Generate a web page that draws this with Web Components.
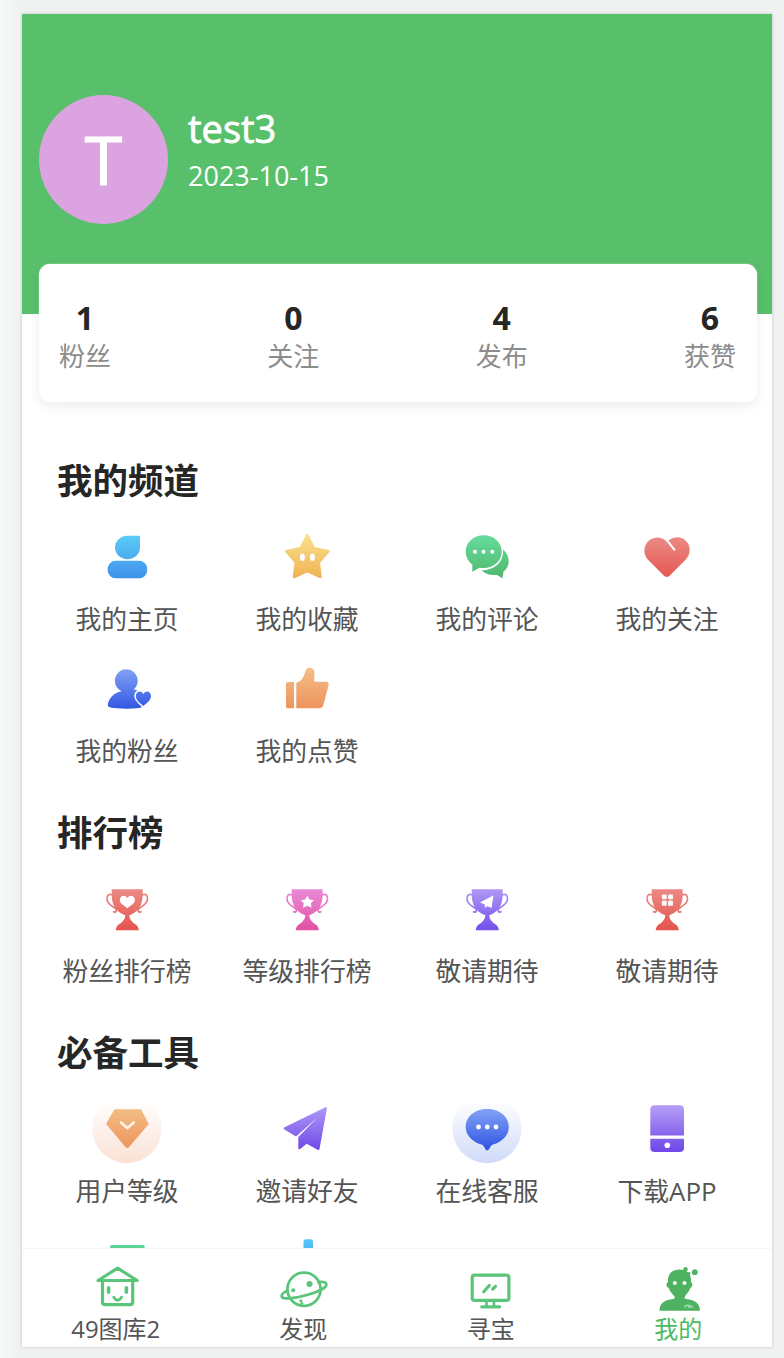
<!DOCTYPE html>
<html lang="zh-CN">
<head>
<meta charset="utf-8">
<title>我的</title>
<style>
    body {
        margin: 0;
        background: linear-gradient(90deg, #f7f9f8 0, #f0f2f1 20px);
        font-family: "Open Sans", "Noto Sans CJK SC", sans-serif;
    }
</style>
</head>
<body>
<mine-page></mine-page>

<script>
const TROPHY = `
    <path d="M19.700 16.300H50.700V21C50.700 31 47.500 38.500 37.300 42.200 C37.500 47 40.500 49.500 44.500 52 Q46.700 54 46.900 57.300H23.600Q23.800 54 26 52C30 49.500 33 47 33.300 42.200C23 38.500 19.700 31 19.700 21Z"/>
    <g fill="none" stroke="url(#g)" stroke-width="1.700" stroke-linecap="round">
        <path d="M20.500 22C17 20 14.500 22.500 15 26.500C15.500 31 20 33 23.500 35.500C25.500 37.500 24 40 21.500 38.800"/>
        <path d="M50 22C53.500 20 56 22.500 55.500 26.500C55 31 50.500 33 47 35.500C45 37.500 46.500 40 49 38.800"/>
    </g>`;

// from / to are the gradient stops, halo is the soft disc behind some icons
const ICONS = {
    home: {
        from: '#5bcdf8', to: '#3f91ea',
        body: `<path d="M35.500 14.700H46.500Q48 14.700 48 16.200V26.500A12.500 11.800 0 1 1 35.500 14.700Z"/>
            <rect x="15.700" y="39.800" width="39.500" height="17.500" rx="8"/>`
    },
    star: {
        from: '#fae08e', to: '#f0b355',
        body: `<path stroke="url(#g)" stroke-width="2.500" stroke-linejoin="round" d="M35.300 14L42 27.300L56.500 30.200L46.800 41.500L48.500 56L35.300 50.200L22 56L23.800 41.500L14.200 30.200L28.500 27.300Z"/>
            <g fill="#fff"><ellipse cx="30.400" cy="36.300" rx="2.500" ry="3.700"/><ellipse cx="40.400" cy="36.300" rx="2.500" ry="3.700"/></g>`
    },
    comment: {
        from: '#66dc9d', to: '#50b86e',
        body: `<path d="M51 28.500C58 34 59 45 51.500 50.500L50.500 57.200L44.500 53.800C38.500 54.500 33 53 29.500 49.300C41 49.500 52 42 51 28.500Z"/>
            <path d="M31.700 14.300C21.500 14.300 13.700 21.500 13.700 30.500C13.700 36 16.400 40.500 20.300 43.600V50.800L27.300 46.700C39.500 48.800 49.700 41.200 49.700 30.800C49.700 21.500 42 14.300 31.700 14.300Z"/>
            <g fill="#fff"><circle cx="23" cy="30.800" r="2"/><circle cx="31.500" cy="30.800" r="2"/><circle cx="40.300" cy="30.800" r="2"/></g>`
    },
    heart: {
        from: '#ec8d88', to: '#e65750',
        body: `<path d="M35 21C29 14 19 15.500 14.700 22C11 28 12 34.500 16.200 39L31.500 54.300Q34.800 57.500 38 54.300L53.800 38.500C59 33 58.800 25 54.500 20.500C49 14.800 40.500 15 35 21Z"/>
            <path fill="none" stroke="#fff" stroke-width="2" stroke-linecap="round" d="M35.500 19.800L42.500 28.800"/>`
    },
    fans: {
        from: '#86a6f6', to: '#2f55e2',
        body: `<circle cx="34.300" cy="27.700" r="11.400"/>
            <path d="M29 36H40C47 37 51 40 53 45L49 54.800C38 56.300 26 56 17.500 54.300C15.500 53.500 15.500 51.500 16.200 49.500C18 44 22.500 39.800 29 38.500Z"/>
            <path stroke="#fff" stroke-width="3" paint-order="stroke" d="M51.400 41C49 36.500 43.800 38.500 43.800 43C43.800 47 47.500 50 51.400 53C55 50 59 47 59 43C59 38.500 53.700 36.500 51.400 41Z"/>`
    },
    like: {
        from: '#f3c087', to: '#ee915a',
        body: `<path d="M16 29H22V55.300H16Q14 55.300 14 53.300V31Q14 29 16 29Z"/>
            <path d="M24.300 29.500C30 28.500 31.500 24 33.500 18C34.500 13.500 42 13.500 42.300 18.500V28.700H54C56.500 28.700 57 30.500 56.500 32.500L51.500 51.500Q50.500 55.300 47 55.300H24.300Z"/>`
    },
    cupHeart: {
        from: '#ec8d88', to: '#e4544e',
        body: `${TROPHY}<path fill="#fff" d="M35.300 25C32.500 21 27.800 22.800 27.800 27C27.800 30.500 32 32.500 35.300 35.300C38.600 32.500 42.900 30.500 42.900 27C42.900 22.800 38 21 35.300 25Z"/>`
    },
    cupStar: {
        from: '#ea8ddb', to: '#e152a3',
        body: `${TROPHY}<path fill="#fff" d="M35.300 22.500L37.400 26.500L41.900 27.200L38.800 30.300L39.500 34.700L35.300 32.700L31.100 34.700L31.800 30.300L28.700 27.200L33.200 26.500Z"/>`
    },
    cupPlane: {
        from: '#b29bf7', to: '#7350ea',
        body: `${TROPHY}<path fill="#fff" d="M28 29.500L41.500 22.200L39.500 35L35.500 33.200L32.800 34.800V31.500Z"/>`
    },
    cupGift: {
        from: '#ec8d88', to: '#e4544e',
        body: `${TROPHY}<g fill="#fff" opacity=".92"><rect x="29.800" y="21.500" width="5" height="4.800" rx="1"/><rect x="36" y="21.500" width="5" height="4.800" rx="1"/><rect x="29.800" y="27.500" width="5" height="5.300" rx="1"/><rect x="36" y="27.500" width="5" height="5.300" rx="1"/></g>`
    },
    level: {
        from: '#f2bf85', to: '#ed935b', halo: '#fae1d4',
        body: `<path d="M22.500 16.300H49L56.800 31L37 54Q35.300 56 33.500 54L14 31Z"/>
            <path fill="none" stroke="#fff4ea" stroke-width="2.700" stroke-linecap="round" stroke-linejoin="round" d="M29 29.500L35.300 35L41.800 29.500"/>`
    },
    invite: {
        from: '#ae99f7', to: '#7049e8',
        body: `<path d="M12 34.500L53.500 14.300Q55 14 54.900 15.500L47.500 56Q47 57.500 45.500 56.800L34.700 50.700L28 56Q26.300 57 26.300 55V44L45.500 24.500L24 43.600L12 36.200Q11 35.300 12 34.500Z"/>`
    },
    service: {
        from: '#86a6f6', to: '#2f55e2', halo: '#d0daf8',
        body: `<path d="M35.300 16C23 16 13.700 23.500 13.700 34C13.700 42.500 20.500 49 29.500 51.500C32.500 52.500 33 57.500 35.300 57.500C37.500 57.500 38 52.500 41 51.500C50 49 56.800 42.500 56.800 34C56.800 23.500 47.500 16 35.300 16Z"/>
            <g fill="#fff"><circle cx="26.500" cy="34" r="2.400"/><circle cx="35.300" cy="34" r="2.400"/><circle cx="44" cy="34" r="2.400"/></g>`
    },
    download: {
        from: '#b29bf7', to: '#7049e8',
        body: `<path d="M22.800 12.200H47.500Q52 12.200 52 16.700V42.500H18.300V16.700Q18.300 12.200 22.800 12.200Z"/>
            <path d="M18.300 45.800H52V54.500Q52 59 47.500 59H22.800Q18.300 59 18.300 54.500Z"/>
            <circle fill="#fff" cx="35.300" cy="52.300" r="2.800"/>`
    },
    list: {
        from: '#5fd99a', to: '#50b86e',
        body: `<rect x="18" y="20" width="34.700" height="38" rx="2"/>`
    },
    pin: {
        from: '#56c6f7', to: '#3f91ea',
        body: `<rect x="31.500" y="14.300" width="9.500" height="40" rx="2.500"/>`
    }
};

const TAB_ICONS = {
    house: `<g fill="none" stroke="#5ac57a" stroke-width="3.200" stroke-linejoin="round" stroke-linecap="round">
            <path d="M6 16.500L25.600 4.200L45.200 16.500Z"/>
            <path d="M10.500 17V38Q10.500 40.700 13.200 40.700H38Q40.700 40.700 40.700 38V17"/>
            <path d="M16.600 23.700V28.300M34.400 23.700V28.300" stroke-width="3.600"/>
            <path d="M21.800 33.200Q25.600 39.200 29.500 33.200" stroke-width="2.800"/></g>`,
    planet: `<g fill="none" stroke="#5ac57a" stroke-width="2.700" stroke-linecap="round">
            <circle cx="25" cy="25.300" r="16.600"/>
            <path d="M8.500 26.500C4.500 28.500 2.200 30.700 2.700 32.500C3.800 36 17 34 28 31C39 28 48 23.500 47.300 20C46.800 18 43.500 17.600 39.500 18"/></g>
            <g fill="#5ac57a"><circle cx="30.500" cy="20" r="3"/><circle cx="14.200" cy="26.300" r="2"/><circle cx="21.800" cy="36.800" r="1.500"/><circle cx="22.800" cy="39.300" r="1.400"/></g>`,
    monitor: `<g fill="none" stroke="#5ac57a" stroke-width="3.200" stroke-linecap="round">
            <rect x="5.200" y="11.200" width="36.700" height="25.200" rx="2.500"/>
            <path d="M16.700 27.700L22.300 21.500M25.700 25.200L28.500 22.300"/>
            <path d="M19.500 37V42M27 37V42" stroke-width="2.600"/>
            <path d="M14.800 42.800H32.500"/></g>`,
    alien: `<g fill="#4eb262">
            <path d="M25.400 5.500C17.500 5.500 13.500 10.500 14 18C11.500 19.500 12.300 23 14.500 23.800C15.500 27 18 29.500 20.500 32.500V34.800C11.500 35.500 5.500 38.500 5.500 46.700H46Q46 36 30.800 34.800V32.500C33 29.500 35.500 27 36.500 23.800C39 22.500 39 19.500 37 18C37.500 10.500 33.500 5.500 25.400 5.500Z"/>
            <circle cx="31.500" cy="5.300" r="2.200"/><circle cx="35" cy="9.500" r="1.500"/><circle cx="40.800" cy="8.200" r="2.900"/></g>
            <g fill="#fff"><circle cx="20.800" cy="19" r="2"/><circle cx="30.500" cy="19" r="2"/></g>
            <path fill="none" stroke="#a9dcb2" stroke-width="1.500" stroke-linecap="round" d="M31 43C31.500 40.500 36 40.500 38.500 43M34.500 43.300H36"/>`
};

class AppIcon extends HTMLElement {

    constructor() {
        super();
        this.attachShadow({ mode: 'open' });
    }

    connectedCallback() {
        const icon = ICONS[this.getAttribute('name')];
        const halo = icon.halo ? '<circle cx="35" cy="35.500" r="34.700" fill="url(#halo)"/>' : '';
        this.shadowRoot.innerHTML = /* html */`
            <style>
                :host { display: block; width: 70px; height: 70px; }
                svg { display: block; overflow: visible; }
            </style>
            <svg width="70" height="70" viewBox="0 0 70 70">
                <defs>
                    <linearGradient id="g" gradientUnits="userSpaceOnUse" x1="0" y1="14" x2="0" y2="57">
                        <stop offset="0" stop-color="${icon.from}"/><stop offset="1" stop-color="${icon.to}"/>
                    </linearGradient>
                    <linearGradient id="halo" x1="0" y1="0" x2="0" y2="1">
                        <stop offset=".1" stop-color="#fff"/><stop offset="1" stop-color="${icon.halo || '#fff'}"/>
                    </linearGradient>
                </defs>
                ${halo}
                <g fill="url(#g)">${icon.body}</g>
            </svg>
        `;
    }
}

class UserHeader extends HTMLElement {

    constructor() {
        super();
        this.attachShadow({ mode: 'open' });
    }

    connectedCallback() {
        this.shadowRoot.innerHTML = /* html */`
            <style>
                :host {
                    display: flex;
                    box-sizing: border-box;
                    height: 300px;
                    padding: 80.500px 17px 0;
                    gap: 20px;
                    background: #58bf6a;
                    color: #fff;
                }
                .avatar {
                    width: 129px;
                    height: 129px;
                    border-radius: 50%;
                    background: #dba3e0;
                    font-size: 68px;
                    line-height: 127px;
                    text-align: center;
                    -webkit-text-stroke: 1.200px #fff;
                }
                .name {
                    margin-top: 8px;
                    font-size: 38px;
                    line-height: 50px;
                    -webkit-text-stroke: .8px #fff;
                }
                .date { font-size: 27px; line-height: 46px; }
            </style>
            <div class="avatar">T</div>
            <div>
                <div class="name"><slot name="name"></slot></div>
                <div class="date"><slot name="date"></slot></div>
            </div>
        `;
    }
}

class StatItem extends HTMLElement {

    constructor() {
        super();
        this.attachShadow({ mode: 'open' });
    }

    connectedCallback() {
        this.shadowRoot.innerHTML = /* html */`
            <style>
                :host { display: block; text-align: center; }
                .count { font-size: 32px; font-weight: 700; line-height: 38px; color: #262626; }
                .label { font-size: 26px; line-height: 39px; color: #8c8c8c; }
            </style>
            <div class="count">${this.getAttribute('count')}</div>
            <div class="label"><slot></slot></div>
        `;
    }
}

class StatsCard extends HTMLElement {

    constructor() {
        super();
        this.attachShadow({ mode: 'open' });
    }

    connectedCallback() {
        this.shadowRoot.innerHTML = /* html */`
            <style>
                :host {
                    display: flex;
                    position: relative;
                    justify-content: space-between;
                    box-sizing: border-box;
                    height: 138px;
                    margin: -50px 15px 0 17px;
                    padding: 35px 21px 0 20px;
                    border-radius: 11px;
                    background: #fff;
                    box-shadow: 0 0 2px rgba(255, 255, 255, .6), 0 4px 12px rgba(0, 0, 0, .08);
                }
            </style>
            <slot></slot>
        `;
    }
}

class MenuSection extends HTMLElement {

    constructor() {
        super();
        this.attachShadow({ mode: 'open' });
    }

    connectedCallback() {
        this.shadowRoot.innerHTML = /* html */`
            <style>
                :host { display: block; margin-top: 27px; padding: 0 15px; }
                h2 {
                    margin: 0 0 21px 20px;
                    font-size: 35.500px;
                    font-weight: 700;
                    line-height: 40px;
                    color: #262626;
                }
                .grid { display: grid; grid-template-columns: repeat(4, 180px); grid-auto-rows: 132px; }
            </style>
            <h2>${this.getAttribute('heading')}</h2>
            <div class="grid"><slot></slot></div>
        `;
    }
}

class MenuItem extends HTMLElement {

    constructor() {
        super();
        this.attachShadow({ mode: 'open' });
    }

    connectedCallback() {
        this.shadowRoot.innerHTML = /* html */`
            <style>
                :host {
                    display: flex;
                    flex-direction: column;
                    align-items: center;
                    gap: 10px;
                    font-size: 25.800px;
                    line-height: 36px;
                    color: #555;
                    white-space: nowrap;
                }
            </style>
            <app-icon name="${this.getAttribute('icon')}"></app-icon>
            <div><slot></slot></div>
        `;
    }
}

class TabItem extends HTMLElement {

    constructor() {
        super();
        this.attachShadow({ mode: 'open' });
    }

    connectedCallback() {
        this.shadowRoot.innerHTML = /* html */`
            <style>
                :host {
                    display: flex;
                    flex: 1;
                    flex-direction: column;
                    align-items: center;
                    padding-top: 15px;
                    font-size: 24px;
                    line-height: 33px;
                    color: #555;
                }
                :host([active]) { color: #4fba62; }
                svg { display: block; overflow: visible; }
            </style>
            <svg width="48" height="48" viewBox="0 0 48 48">${TAB_ICONS[this.getAttribute('icon')]}</svg>
            <div><slot></slot></div>
        `;
    }
}

class TabBar extends HTMLElement {

    constructor() {
        super();
        this.attachShadow({ mode: 'open' });
    }

    connectedCallback() {
        this.shadowRoot.innerHTML = /* html */`
            <style>
                :host {
                    display: flex;
                    flex: none;
                    box-sizing: border-box;
                    height: 99px;
                    border-top: 1px solid #f6f6f6;
                    background: #fff;
                }
            </style>
            <slot></slot>
        `;
    }
}

class MinePage extends HTMLElement {

    constructor() {
        super();
        this.attachShadow({ mode: 'open' });
    }

    static get styles() {
        return `
            :host {
                display: block;
                box-sizing: border-box;
                height: 1358px;
                padding: 14px 12px 11px 22px;
                overflow: hidden;
            }
            .phone {
                display: flex;
                flex-direction: column;
                height: 1333px;
                background: #fff;
                box-shadow: 0 0 3px rgba(0, 0, 0, .2);
            }
            .content { flex: 1; min-height: 0; overflow: hidden; }
            menu-section:first-of-type { margin-top: 58px; }
        `
    }

    connectedCallback() {
        this.render();
    }

    render() {
        this.shadowRoot.innerHTML = /* html */`
        <style>${MinePage.styles}</style>
        <div class="phone">
            <div class="content">
                <user-header>
                    <span slot="name">test3</span>
                    <span slot="date">2023-10-15</span>
                </user-header>
                <stats-card>
                    <stat-item count="1">粉丝</stat-item>
                    <stat-item count="0">关注</stat-item>
                    <stat-item count="4">发布</stat-item>
                    <stat-item count="6">获赞</stat-item>
                </stats-card>
                <menu-section heading="我的频道">
                    <menu-item icon="home">我的主页</menu-item>
                    <menu-item icon="star">我的收藏</menu-item>
                    <menu-item icon="comment">我的评论</menu-item>
                    <menu-item icon="heart">我的关注</menu-item>
                    <menu-item icon="fans">我的粉丝</menu-item>
                    <menu-item icon="like">我的点赞</menu-item>
                </menu-section>
                <menu-section heading="排行榜">
                    <menu-item icon="cupHeart">粉丝排行榜</menu-item>
                    <menu-item icon="cupStar">等级排行榜</menu-item>
                    <menu-item icon="cupPlane">敬请期待</menu-item>
                    <menu-item icon="cupGift">敬请期待</menu-item>
                </menu-section>
                <menu-section heading="必备工具">
                    <menu-item icon="level">用户等级</menu-item>
                    <menu-item icon="invite">邀请好友</menu-item>
                    <menu-item icon="service">在线客服</menu-item>
                    <menu-item icon="download">下载APP</menu-item>
                    <menu-item icon="list"></menu-item>
                    <menu-item icon="pin"></menu-item>
                </menu-section>
            </div>
            <tab-bar>
                <tab-item icon="house">49图库2</tab-item>
                <tab-item icon="planet">发现</tab-item>
                <tab-item icon="monitor">寻宝</tab-item>
                <tab-item icon="alien" active>我的</tab-item>
            </tab-bar>
        </div>
        `;
    }

}

customElements.define('app-icon', AppIcon);
customElements.define('user-header', UserHeader);
customElements.define('stat-item', StatItem);
customElements.define('stats-card', StatsCard);
customElements.define('menu-item', MenuItem);
customElements.define('menu-section', MenuSection);
customElements.define('tab-item', TabItem);
customElements.define('tab-bar', TabBar);
customElements.define('mine-page', MinePage);
</script>
</body>
</html>
